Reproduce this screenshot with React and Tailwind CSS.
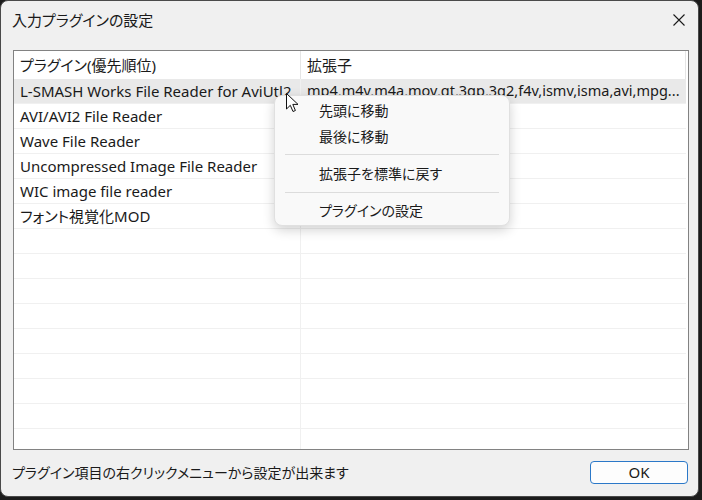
import React from "react";

const FONT =
  "[font-family:'Noto_Sans','Noto_Sans_CJK_JP',sans-serif] [font-feature-settings:'palt']";

const plugins = [
  { name: "L-SMASH Works File Reader for AviUtl2", ext: "mp4,m4v,m4a,mov,qt,3gp,3g2,f4v,ismv,isma,avi,mpg..." },
  { name: "AVI/AVI2 File Reader", ext: "" },
  { name: "Wave File Reader", ext: "" },
  { name: "Uncompressed Image File Reader", ext: "" },
  { name: "WIC image file reader", ext: "" },
  { name: "フォント視覚化MOD", ext: "" },
];

const TOTAL_ROWS = 14;

function Row({ item, selected }) {
  return (
    <div
      className={`flex h-[25px] border-b border-[#f0f0f0] ${selected ? "bg-[#e9e9e9]" : ""}`}
    >
      <div className="w-[287px] shrink-0 border-r border-[#f0f0f0] pl-[6px] flex items-center overflow-hidden whitespace-nowrap">
        {item ? item.name : ""}
      </div>
      <div className="flex-1 pl-[6px] flex items-center whitespace-nowrap text-[14.5px]">
        {item ? item.ext : ""}
      </div>
    </div>
  );
}

function MenuItem({ children }) {
  return (
    <div className="h-[26px] flex items-center pl-[44px] text-[14px] text-[#1a1a1a]">
      {children}
    </div>
  );
}

function MenuSeparator({ pad }) {
  return (
    <div className={`${pad} px-[10px]`}>
      <div className="h-px bg-[#dcdcdc]" />
    </div>
  );
}

export default function App() {
  const rows = Array.from({ length: TOTAL_ROWS }, (_, i) => plugins[i]);
  return (
    <div className={`w-[702px] h-[500px] bg-[#1c1c1c] ${FONT}`}>
      <div className="relative w-[699px] h-[497px] rounded-[8px] bg-[#f0f0f0] border border-[#4a4a4a] flex flex-col">
        {/* title bar */}
        <div className="h-[37px] flex items-center justify-between pl-[11px] pr-[12px] pt-[1px]">
          <span className="text-[15px] text-[#1a1a1a]">入力プラグインの設定</span>
          <svg width="12" height="12" viewBox="0 0 12 12" className="mr-[1px]">
            <path d="M0.5 0.5 L11.5 11.5 M11.5 0.5 L0.5 11.5" stroke="#1a1a1a" strokeWidth="1.1" fill="none" />
          </svg>
        </div>

        {/* plugin list */}
        <div className="ml-[12px] mt-[12px] w-[676px] h-[400px] border border-[#828282] bg-white overflow-hidden text-[15px] text-[#1a1a1a]">
          <div className="w-[672px]">
            <div className="flex h-[28px]">
              <div className="w-[287px] shrink-0 border-r border-[#e5e5e5] pl-[6px] flex items-center">
                プラグイン(優先順位)
              </div>
              <div className="flex-1 border-r border-[#e5e5e5] pl-[6px] flex items-center">拡張子</div>
            </div>
            {rows.map((item, i) => (
              <Row key={i} item={item} selected={i === 0} />
            ))}
            <div className="flex h-[20px]">
              <div className="w-[287px] shrink-0 border-r border-[#f0f0f0]" />
            </div>
          </div>
        </div>

        {/* footer */}
        <div className="flex-1 flex items-center justify-between pl-[11px] pr-[10px] pb-[2px]">
          <span className="text-[14px] text-[#1a1a1a]">プラグイン項目の右クリックメニューから設定が出来ます</span>
          <button className="w-[98px] h-[23px] rounded-[4px] border border-[#2b78c8] bg-[#fdfdfd] text-[15px] text-[#1a1a1a] flex items-center justify-center">
            OK
          </button>
        </div>

        {/* context menu */}
        <div className="absolute left-[273px] top-[94px] w-[236px] h-[131px] rounded-[8px] bg-[#f9f9f9] border border-[#e0e0e0] shadow-[0_4px_12px_rgba(0,0,0,0.18)] pt-[1px]">
          <MenuItem>先頭に移動</MenuItem>
          <MenuItem>最後に移動</MenuItem>
          <MenuSeparator pad="pt-[5px] pb-[5px]" />
          <MenuItem>拡張子を標準に戻す</MenuItem>
          <MenuSeparator pad="pt-[6px] pb-[4px]" />
          <MenuItem>プラグインの設定</MenuItem>
        </div>

        {/* mouse pointer */}
        <svg
          className="absolute left-[285px] top-[92px]"
          width="13"
          height="20"
          viewBox="0 0 13 20"
        >
          <path
            d="M0.5 0.5 L0.5 16 L4.3 12.3 L7 18.5 L9.4 17.5 L6.8 11.4 L12 11.4 Z"
            fill="#ffffff"
            stroke="#111111"
            strokeWidth="1"
            strokeLinejoin="round"
          />
        </svg>
      </div>
    </div>
  );
}
